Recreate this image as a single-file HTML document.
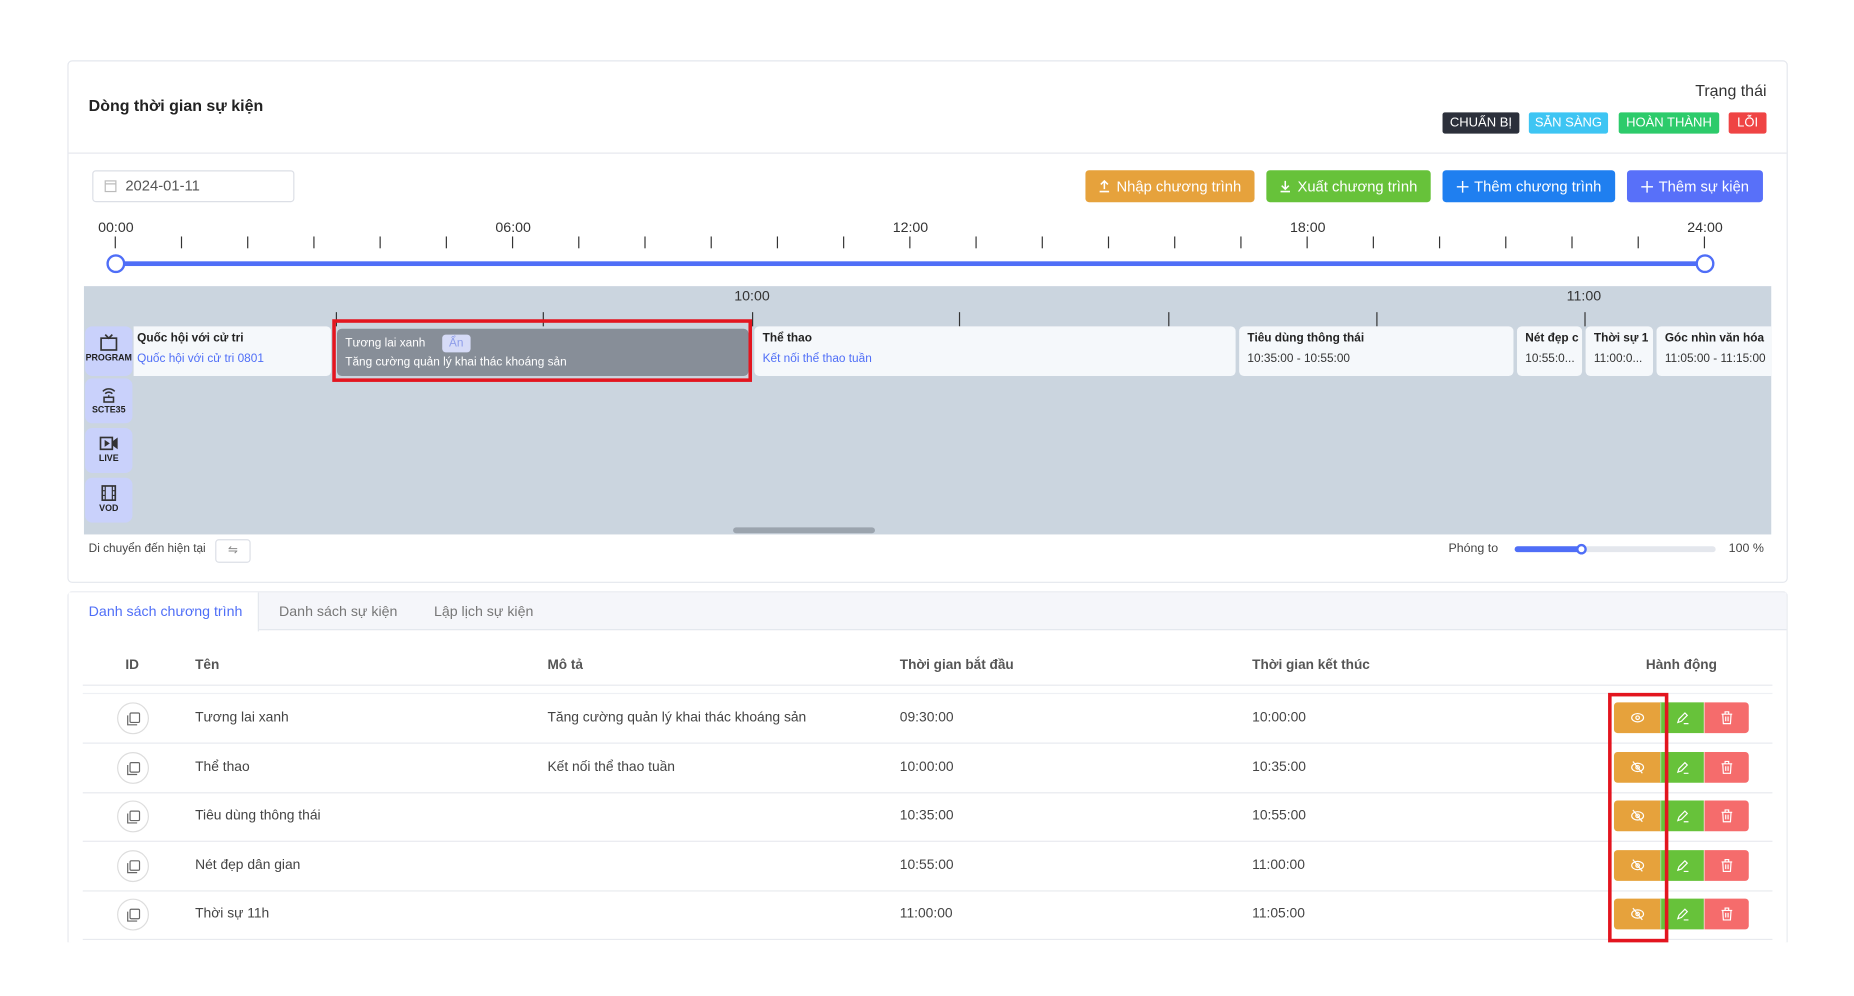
<!DOCTYPE html>
<html><head><meta charset="utf-8"><style>
*{box-sizing:border-box;margin:0;padding:0}
html,body{width:1854px;height:995px;overflow:hidden;background:#fff}
body{font-family:"Liberation Sans","DejaVu Sans",sans-serif;color:#333}
#w{position:absolute;left:0;top:0;width:1568px;height:842px;transform:scale(1.1824);transform-origin:0 0}
.a{position:absolute}
.card{position:absolute;border:1px solid #e4e7ed;border-radius:4px;background:#fff}
.badge{position:absolute;top:95px;height:18px;line-height:18px;font-size:11px;color:#fff;text-align:center;border-radius:2px}
.btn{position:absolute;top:144px;height:27px;font-size:12.5px;color:#fff;border-radius:3px;display:flex;align-items:center;justify-content:center;gap:5px}
.lbl{position:absolute;top:185px;font-size:12px;color:#333;transform:translateX(-50%)}
.tk{position:absolute;top:200px;width:1px;height:10px;background:#333}
.lane{position:absolute;left:72px;width:40px;background:#c9d1fb;border-radius:6px;text-align:center;font-size:7.5px;font-weight:bold;color:#222}
.lane svg{display:block;margin:6px auto 1px}
.it{position:absolute;top:276px;height:42px;background:#f5f8fb;border-radius:4px;padding:4px 7px;font-size:10px;white-space:nowrap;overflow:hidden}
.it b{display:block;font-weight:600;color:#222;margin-top:1px}
.it i{display:block;font-style:normal;margin-top:6px;color:#333}
.it i.bl{color:#4f6ef7}
.tt{position:absolute;top:264px;width:1px;height:12px;background:#333}
.th{position:absolute;top:557px;font-size:11.5px;color:#555;font-weight:600}
.td{position:absolute;font-size:11.7px;color:#444}
.hr{position:absolute;left:70px;width:1429px;height:1px;background:#e8eaef}
.cp{position:absolute;left:99px;width:27px;height:27px;border:1px solid #ddd;border-radius:50%}
.ab{position:absolute;height:26px;width:38px}
</style></head><body><div id="w">

<div class="card" style="left:57px;top:51px;width:1455px;height:442px"></div>
<div class="a" style="left:58px;top:129px;width:1453px;height:1px;background:#e6e8ee"></div>
<div class="a" style="left:75px;top:82px;font-size:13.5px;font-weight:600;color:#222">Dòng thời gian sự kiện</div>
<div class="a" style="left:1400px;width:94px;text-align:right;top:69px;font-size:13.5px;color:#333">Trạng thái</div>
<div class="badge" style="left:1220px;width:65px;background:#2c303b">CHUẨN BỊ</div>
<div class="badge" style="left:1293px;width:67px;background:#3ec5f3">SẴN SÀNG</div>
<div class="badge" style="left:1369px;width:85px;background:#2dcb6b">HOÀN THÀNH</div>
<div class="badge" style="left:1462px;width:32px;background:#ef4444">LỖI</div>

<div class="a" style="left:78px;top:144px;width:171px;height:27px;border:1px solid #dcdfe6;border-radius:3px"></div>
<svg class="a" style="left:88px;top:151px" width="11" height="12" viewBox="0 0 11 12"><rect x="1" y="2" width="9" height="9" fill="none" stroke="#bbb"/><line x1="1" y1="4.5" x2="10" y2="4.5" stroke="#bbb"/></svg>
<div class="a" style="left:106px;top:150px;font-size:12.5px;color:#555">2024-01-11</div>

<div class="btn" style="left:918px;width:143px;background:#e6a23c"><svg width="10" height="11" viewBox="0 0 10 11"><path d="M5 8V1M2 4l3-3 3 3M1 10h8" fill="none" stroke="#fff" stroke-width="1.3"/></svg>Nhập chương trình</div>
<div class="btn" style="left:1071px;width:139px;background:#67c23a"><svg width="10" height="11" viewBox="0 0 10 11"><path d="M5 1v7M2 5l3 3 3-3M1 10h8" fill="none" stroke="#fff" stroke-width="1.3"/></svg>Xuất chương trình</div>
<div class="btn" style="left:1220px;width:146px;background:#1f7ff0"><svg width="10" height="10" viewBox="0 0 10 10"><path d="M5 0v10M0 5h10" stroke="#fff" stroke-width="1.2"/></svg>Thêm chương trình</div>
<div class="btn" style="left:1376px;width:115px;background:#5870f9"><svg width="10" height="10" viewBox="0 0 10 10"><path d="M5 0v10M0 5h10" stroke="#fff" stroke-width="1.2"/></svg>Thêm sự kiện</div>

<div class="lbl" style="left:98px">00:00</div>
<div class="lbl" style="left:434px">06:00</div>
<div class="lbl" style="left:770px">12:00</div>
<div class="lbl" style="left:1106px">18:00</div>
<div class="lbl" style="left:1442px">24:00</div>
<div id="ticks"></div>
<div class="a" style="left:98px;top:221px;width:1344px;height:4px;background:#4f6ef7"></div>
<div class="a" style="left:90px;top:215px;width:16px;height:16px;border:2px solid #4f6ef7;border-radius:50%;background:#fff"></div>
<div class="a" style="left:1434px;top:215px;width:16px;height:16px;border:2px solid #4f6ef7;border-radius:50%;background:#fff"></div>

<div class="a" style="left:71px;top:242px;width:1427px;height:210px;background:#cbd5df"></div>
<div class="a" style="left:620px;top:446px;width:120px;height:5px;border-radius:3px;background:#9ba4ae"></div>
<div class="a" style="left:621px;top:243px;font-size:12px;color:#333">10:00</div>
<div class="a" style="left:1325px;top:243px;font-size:12px;color:#333">11:00</div>
<div class="tt" style="left:284px"></div><div class="tt" style="left:459px"></div><div class="tt" style="left:636px"></div><div class="tt" style="left:811px"></div><div class="tt" style="left:988px"></div><div class="tt" style="left:1164px"></div><div class="tt" style="left:1340px"></div>

<div class="lane" style="top:276px;height:42px"><svg width="16" height="15" viewBox="0 0 16 15"><rect x="1.5" y="4" width="13" height="10" fill="none" stroke="#333" stroke-width="1.4"/><path d="M5 1l3 3 3-3" fill="none" stroke="#333" stroke-width="1.4"/></svg>PROGRAM</div>
<div class="lane" style="top:320px;height:38px"><svg width="14" height="15" viewBox="0 0 14 15"><path d="M2 5a7 7 0 0 1 10 0M4 7a4 4 0 0 1 6 0" fill="none" stroke="#333" stroke-width="1.3"/><rect x="3" y="10" width="8" height="4" fill="none" stroke="#333" stroke-width="1.3"/><line x1="7" y1="8" x2="7" y2="10" stroke="#333"/></svg>SCTE35</div>
<div class="lane" style="top:362px;height:38px"><svg width="16" height="14" viewBox="0 0 16 14"><rect x="1" y="2" width="10" height="10" fill="none" stroke="#333" stroke-width="1.4"/><path d="M11 6l4-3v8l-4-3M5 5l3 2-3 2z" fill="#333" stroke="#333"/></svg>LIVE</div>
<div class="lane" style="top:404px;height:38px"><svg width="14" height="14" viewBox="0 0 14 14"><rect x="1.5" y="1" width="11" height="12" fill="none" stroke="#333" stroke-width="1.4"/><path d="M4 1v12M10 1v12M1.5 5h2.5M1.5 9h2.5M10 5h2.5M10 9h2.5" stroke="#333"/></svg>VOD</div>

<div class="it" style="left:113px;width:167px;border-radius:0 4px 4px 0;padding-left:3px"><b>Quốc hội với cử tri</b><i class="bl">Quốc hội với cử tri 0801</i></div>
<div class="it" style="left:285px;top:278px;width:348px;height:40px;background:#878e98;color:#fff;padding:5px 7px"><span style="font-size:10px">Tương lai xanh</span><span style="display:inline-block;margin-left:14px;padding:2px 6px;background:#d6dbf7;color:#8e9de9;border-radius:3px">Ẩn</span><i style="color:#fff;margin-top:3px">Tăng cường quản lý khai thác khoáng sản</i></div>
<div class="a" style="left:281px;top:270px;width:355px;height:53px;border:3px solid #e3151f"></div>
<div class="it" style="left:638px;width:407px"><b>Thể thao</b><i class="bl">Kết nối thể thao tuần</i></div>
<div class="it" style="left:1048px;width:232px"><b>Tiêu dùng thông thái</b><i>10:35:00 - 10:55:00</i></div>
<div class="it" style="left:1283px;width:55px"><b>Nét đẹp c</b><i>10:55:0...</i></div>
<div class="it" style="left:1341px;width:57px"><b>Thời sự 1</b><i>11:00:0...</i></div>
<div class="it" style="left:1401px;width:97px;border-radius:4px 0 0 4px"><b>Góc nhìn văn hóa</b><i>11:05:00 - 11:15:00</i></div>

<div class="a" style="left:75px;top:459px;font-size:10px;color:#444">Di chuyển đến hiện tại</div>
<div class="a" style="left:182px;top:456px;width:30px;height:20px;border:1px solid #dcdfe6;border-radius:3px;text-align:center;font-size:10px;line-height:18px;color:#888">⇋</div>
<div class="a" style="left:1225px;top:458px;font-size:10.5px;color:#444">Phóng to</div>
<div class="a" style="left:1281px;top:462px;width:170px;height:5px;border-radius:3px;background:#e4e7ed"></div>
<div class="a" style="left:1281px;top:462px;width:57px;height:5px;border-radius:3px;background:#4f6ef7"></div>
<div class="a" style="left:1333px;top:460px;width:9px;height:9px;border:2px solid #4f6ef7;border-radius:50%;background:#fff"></div>
<div class="a" style="left:1462px;top:458px;font-size:10.5px;color:#444">100 %</div>

<div class="card" style="left:57px;top:500px;width:1455px;height:297px;border-bottom:none;border-radius:4px 4px 0 0"></div>
<div class="a" style="left:58px;top:501px;width:1453px;height:32px;background:#f5f6fa;border-bottom:1px solid #e4e7ed"></div>
<div class="a" style="left:58px;top:501px;width:161px;height:33px;background:#fff;border-right:1px solid #e4e7ed"></div>
<div class="a" style="left:75px;top:510px;font-size:12px;color:#4f6ef7">Danh sách chương trình</div>
<div class="a" style="left:236px;top:510px;font-size:12px;color:#777">Danh sách sự kiện</div>
<div class="a" style="left:367px;top:510px;font-size:12px;color:#777">Lập lịch sự kiện</div>

<div class="th" style="left:106px">ID</div><div class="th" style="left:165px">Tên</div><div class="th" style="left:463px">Mô tả</div><div class="th" style="left:761px">Thời gian bắt đầu</div><div class="th" style="left:1059px">Thời gian kết thúc</div><div class="th" style="left:1392px">Hành động</div>
<div class="hr" style="top:579px"></div>
<div class="hr" style="top:586px;background:#eef0f4"></div>
<div id="rows"></div>
<div class="a" style="left:1360px;top:586px;width:51px;height:211px;border:3px solid #e3151f"></div>
</div>
<script>
var t='';for(var i=0;i<=24;i++){t+='<div class="tk" style="left:'+(97+i*56)+'px"></div>';}
document.getElementById('ticks').innerHTML=t;
var R=[["Tương lai xanh","Tăng cường quản lý khai thác khoáng sản","09:30:00","10:00:00"],["Thể thao","Kết nối thể thao tuần","10:00:00","10:35:00"],["Tiêu dùng thông thái","","10:35:00","10:55:00"],["Nét đẹp dân gian","","10:55:00","11:00:00"],["Thời sự 11h","","11:00:00","11:05:00"]];
var h='';
var eye='<svg width="12" height="10" viewBox="0 0 12 10"><ellipse cx="6" cy="5" rx="5" ry="3.5" fill="none" stroke="#fff"/><circle cx="6" cy="5" r="1.5" fill="none" stroke="#fff"/></svg>';
var eyeo='<svg width="12" height="12" viewBox="0 0 12 12"><ellipse cx="6" cy="6" rx="5" ry="3.5" fill="none" stroke="#fff"/><circle cx="6" cy="6" r="1.5" fill="none" stroke="#fff"/><line x1="2" y1="1" x2="10" y2="11" stroke="#fff"/></svg>';
var pen='<svg width="12" height="12" viewBox="0 0 12 12"><path d="M2 10l1-3 5-5 2 2-5 5zM7 11h4" fill="none" stroke="#fff"/></svg>';
var bin='<svg width="11" height="12" viewBox="0 0 11 12"><path d="M1 3h9M4 3V1h3v2M2 3l.5 8h6L9 3M4.5 5v4M6.5 5v4" fill="none" stroke="#fff"/></svg>';
for(var k=0;k<5;k++){var c=607+k*41.5;var r=R[k];
h+='<div class="cp" style="top:'+(c-13)+'px"><svg style="position:absolute;left:7px;top:7px" width="12" height="12" viewBox="0 0 12 12"><rect x="3" y="1" width="8" height="8" rx="1" fill="none" stroke="#666"/><path d="M1 3v8h8" fill="none" stroke="#666"/></svg></div>';
h+='<div class="td" style="left:165px;top:'+(c-7)+'px">'+r[0]+'</div><div class="td" style="left:463px;top:'+(c-7)+'px">'+r[1]+'</div><div class="td" style="left:761px;top:'+(c-7)+'px">'+r[2]+'</div><div class="td" style="left:1059px;top:'+(c-7)+'px">'+r[3]+'</div>';
var st='display:flex;align-items:center;justify-content:center;top:'+(c-13)+'px;';
h+='<div class="ab" style="'+st+'left:1365px;width:39px;background:#e6a23c;border-radius:3px 0 0 3px">'+(k==0?eye:eyeo)+'</div>';
h+='<div class="ab" style="'+st+'left:1404px;width:37px;background:#67c23a;border-left:1px solid #a7d98a">'+pen+'</div>';
h+='<div class="ab" style="'+st+'left:1441px;width:38px;background:#f56c6c;border-radius:0 3px 3px 0;border-left:1px solid #f9b0b0">'+bin+'</div>';
h+='<div class="hr" style="top:'+(c+21)+'px"></div>';}
document.getElementById('rows').innerHTML=h;
</script>
</body></html>
